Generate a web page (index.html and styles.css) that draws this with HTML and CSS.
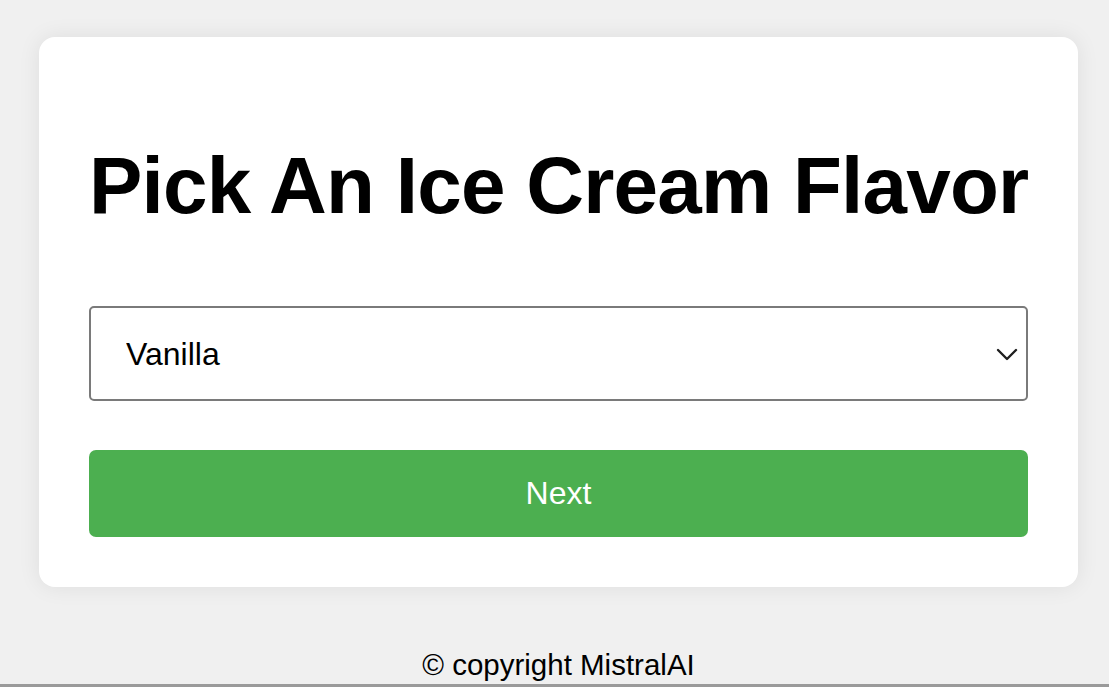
FILE: index.html
```html
<!DOCTYPE html>
<html lang="en">
<head>
<meta charset="utf-8">
<title>Pick An Ice Cream Flavor</title>
<link rel="stylesheet" href="styles.css">
</head>
<body>
<div class="page">
  <main class="card">
    <h1 class="title">Pick An Ice Cream Flavor</h1>
    <div class="select-wrap">
      <select class="flavor">
        <option>Vanilla</option>
        <option>Chocolate</option>
        <option>Strawberry</option>
        <option>Mint</option>
      </select>
      <svg class="chevron" width="22" height="14" viewBox="0 0 22 14" aria-hidden="true">
        <path d="M2 2 L11 11 L20 2" fill="none" stroke="#1f1f1f" stroke-width="2.4" stroke-linecap="round" stroke-linejoin="round"/>
      </svg>
    </div>
    <button class="next" type="button">Next</button>
  </main>
  <footer class="footer">© copyright MistralAI</footer>
</div>
</body>
</html>
```

FILE: styles.css
```css
* { box-sizing: border-box; }
html, body { margin: 0; padding: 0; }
body {
  background: #f0f0f0;
  font-family: "Liberation Sans", Arial, sans-serif;
  color: #000;
}
.page {
  height: 687px;
  display: flex;
  flex-direction: column;
  border-bottom: 3px solid #9a9a9a;
}
.card {
  margin: 37px 0 0 39px;
  width: 1039px;
  background: #fff;
  border-radius: 16px;
  padding: 50px;
  box-shadow: 0 0 22px rgba(0, 0, 0, 0.08);
}
.title {
  font-size: 80px;
  font-weight: bold;
  text-align: center;
  letter-spacing: -0.75px;
  margin: 53px 0 74px;
  line-height: 92px;
  white-space: nowrap;
}
.select-wrap {
  position: relative;
  margin-bottom: 49px;
}
.flavor {
  display: block;
  width: 100%;
  height: 95px;
  appearance: none;
  -webkit-appearance: none;
  background: #fff;
  border: 2px solid #7a7a7a;
  border-radius: 5px;
  padding: 0 0 0 35px;
  font-family: "Liberation Sans", Arial, sans-serif;
  font-size: 32px;
  color: #000;
}
.chevron {
  position: absolute;
  right: 10px;
  top: 42px;
}
.next {
  display: block;
  width: 100%;
  height: 87px;
  background: #4caf50;
  border: none;
  border-radius: 7px;
  color: #fff;
  font-family: "Liberation Sans", Arial, sans-serif;
  font-size: 32px;
  padding: 0;
}
.footer {
  margin-top: auto;
  padding-bottom: 3px;
  text-align: center;
  font-size: 29.5px;
  line-height: 32px;
  padding-left: 8px;
}
```
